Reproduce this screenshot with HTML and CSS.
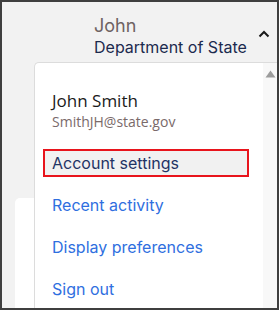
FILE: index.html
```html
<!DOCTYPE html>
<html lang="en">
<head>
<meta charset="utf-8">
<link rel="stylesheet" href="styles.css">
</head>
<body>
<div class="frame">
  <header class="header">
    <div class="who">
      <div class="first">John</div>
      <div class="dept">Department of State</div>
    </div>
    <svg class="chev" width="12" height="8" viewBox="0 0 12 8"><path d="M1.5 6.5 L6 2 L10.5 6.5" fill="none" stroke="#1a1a1a" stroke-width="2"/></svg>
  </header>
  <div class="content">
    <div class="card"></div>
  </div>
  <div class="menu">
    <div class="menu-body">
      <div class="user">
        <div class="name">John Smith</div>
        <div class="email">SmithJH@state.gov</div>
      </div>
      <nav class="links">
        <a class="link active">Account settings</a>
        <a class="link">Recent activity</a>
        <a class="link">Display preferences</a>
        <a class="link">Sign out</a>
      </nav>
    </div>
    <div class="scrollbar">
      <svg class="up" width="11" height="8" viewBox="0 0 11 8"><path d="M5.5 0.5 L10.5 7.5 L0.5 7.5 Z" fill="#9c9c9c"/></svg>
    </div>
  </div>
</div>
</body>
</html>
```
FILE: styles.css
```css
html, body {
  margin: 0;
  padding: 0;
}
body {
  width: 279px;
  height: 310px;
  overflow: hidden;
}
.frame {
  position: relative;
  box-sizing: border-box;
  width: 279px;
  height: 310px;
  border: 2px solid #3f3f3f;
  background: #f2f2f2;
  overflow: hidden;
  font-family: Inter, "Liberation Sans", sans-serif;
}
.header {
  display: flex;
  align-items: flex-start;
  padding: 13px 0 0 92px;
  height: 45px;
}
.who {
  flex: 1;
}
.first {
  font-size: 18px;
  line-height: 22px;
  color: #6e6262;
}
.dept {
  font-size: 16px;
  line-height: 20px;
  color: #1c2a4e;
}
.chev {
  margin: 15px 7px 0 0;
}
.content {
  padding: 138px 0 0 13px;
}
.card {
  width: 60px;
  height: 120px;
  background: #fff;
  border-radius: 5px;
}
.menu {
  position: absolute;
  left: 32px;
  top: 60px;
  right: 0;
  bottom: 0;
  display: flex;
  background: #fff;
  border-top: 1px solid #dcdcdc;
  border-left: 1px solid #dcdcdc;
  border-top-left-radius: 5px;
}
.menu-body {
  flex: 1;
  padding: 0 0 0 8px;
}
.user {
  padding: 26px 0 0 9px;
  height: 60px;
  box-sizing: border-box;
}
.name {
  font-family: "Open Sans", sans-serif;
  font-size: 17px;
  line-height: 24px;
  color: #1a1a1a;
}
.email {
  font-family: "Open Sans", sans-serif;
  font-size: 14px;
  line-height: 18px;
  color: #7a6a6a;
}
.links {
  display: flex;
  flex-direction: column;
  gap: 14px;
  padding-top: 26px;
  width: 206px;
}
.link {
  display: block;
  border: 2px solid transparent;
  padding: 0 7px;
  font-size: 16px;
  line-height: 24px;
  color: #2f6fdf;
}
.link.active {
  border-color: #e8141c;
  background: #f1f1f1;
  color: #1f3465;
}
.scrollbar {
  width: 14px;
  background: #f8f8f8;
  display: flex;
  justify-content: center;
}
.up {
  margin-top: 7px;
}
```
